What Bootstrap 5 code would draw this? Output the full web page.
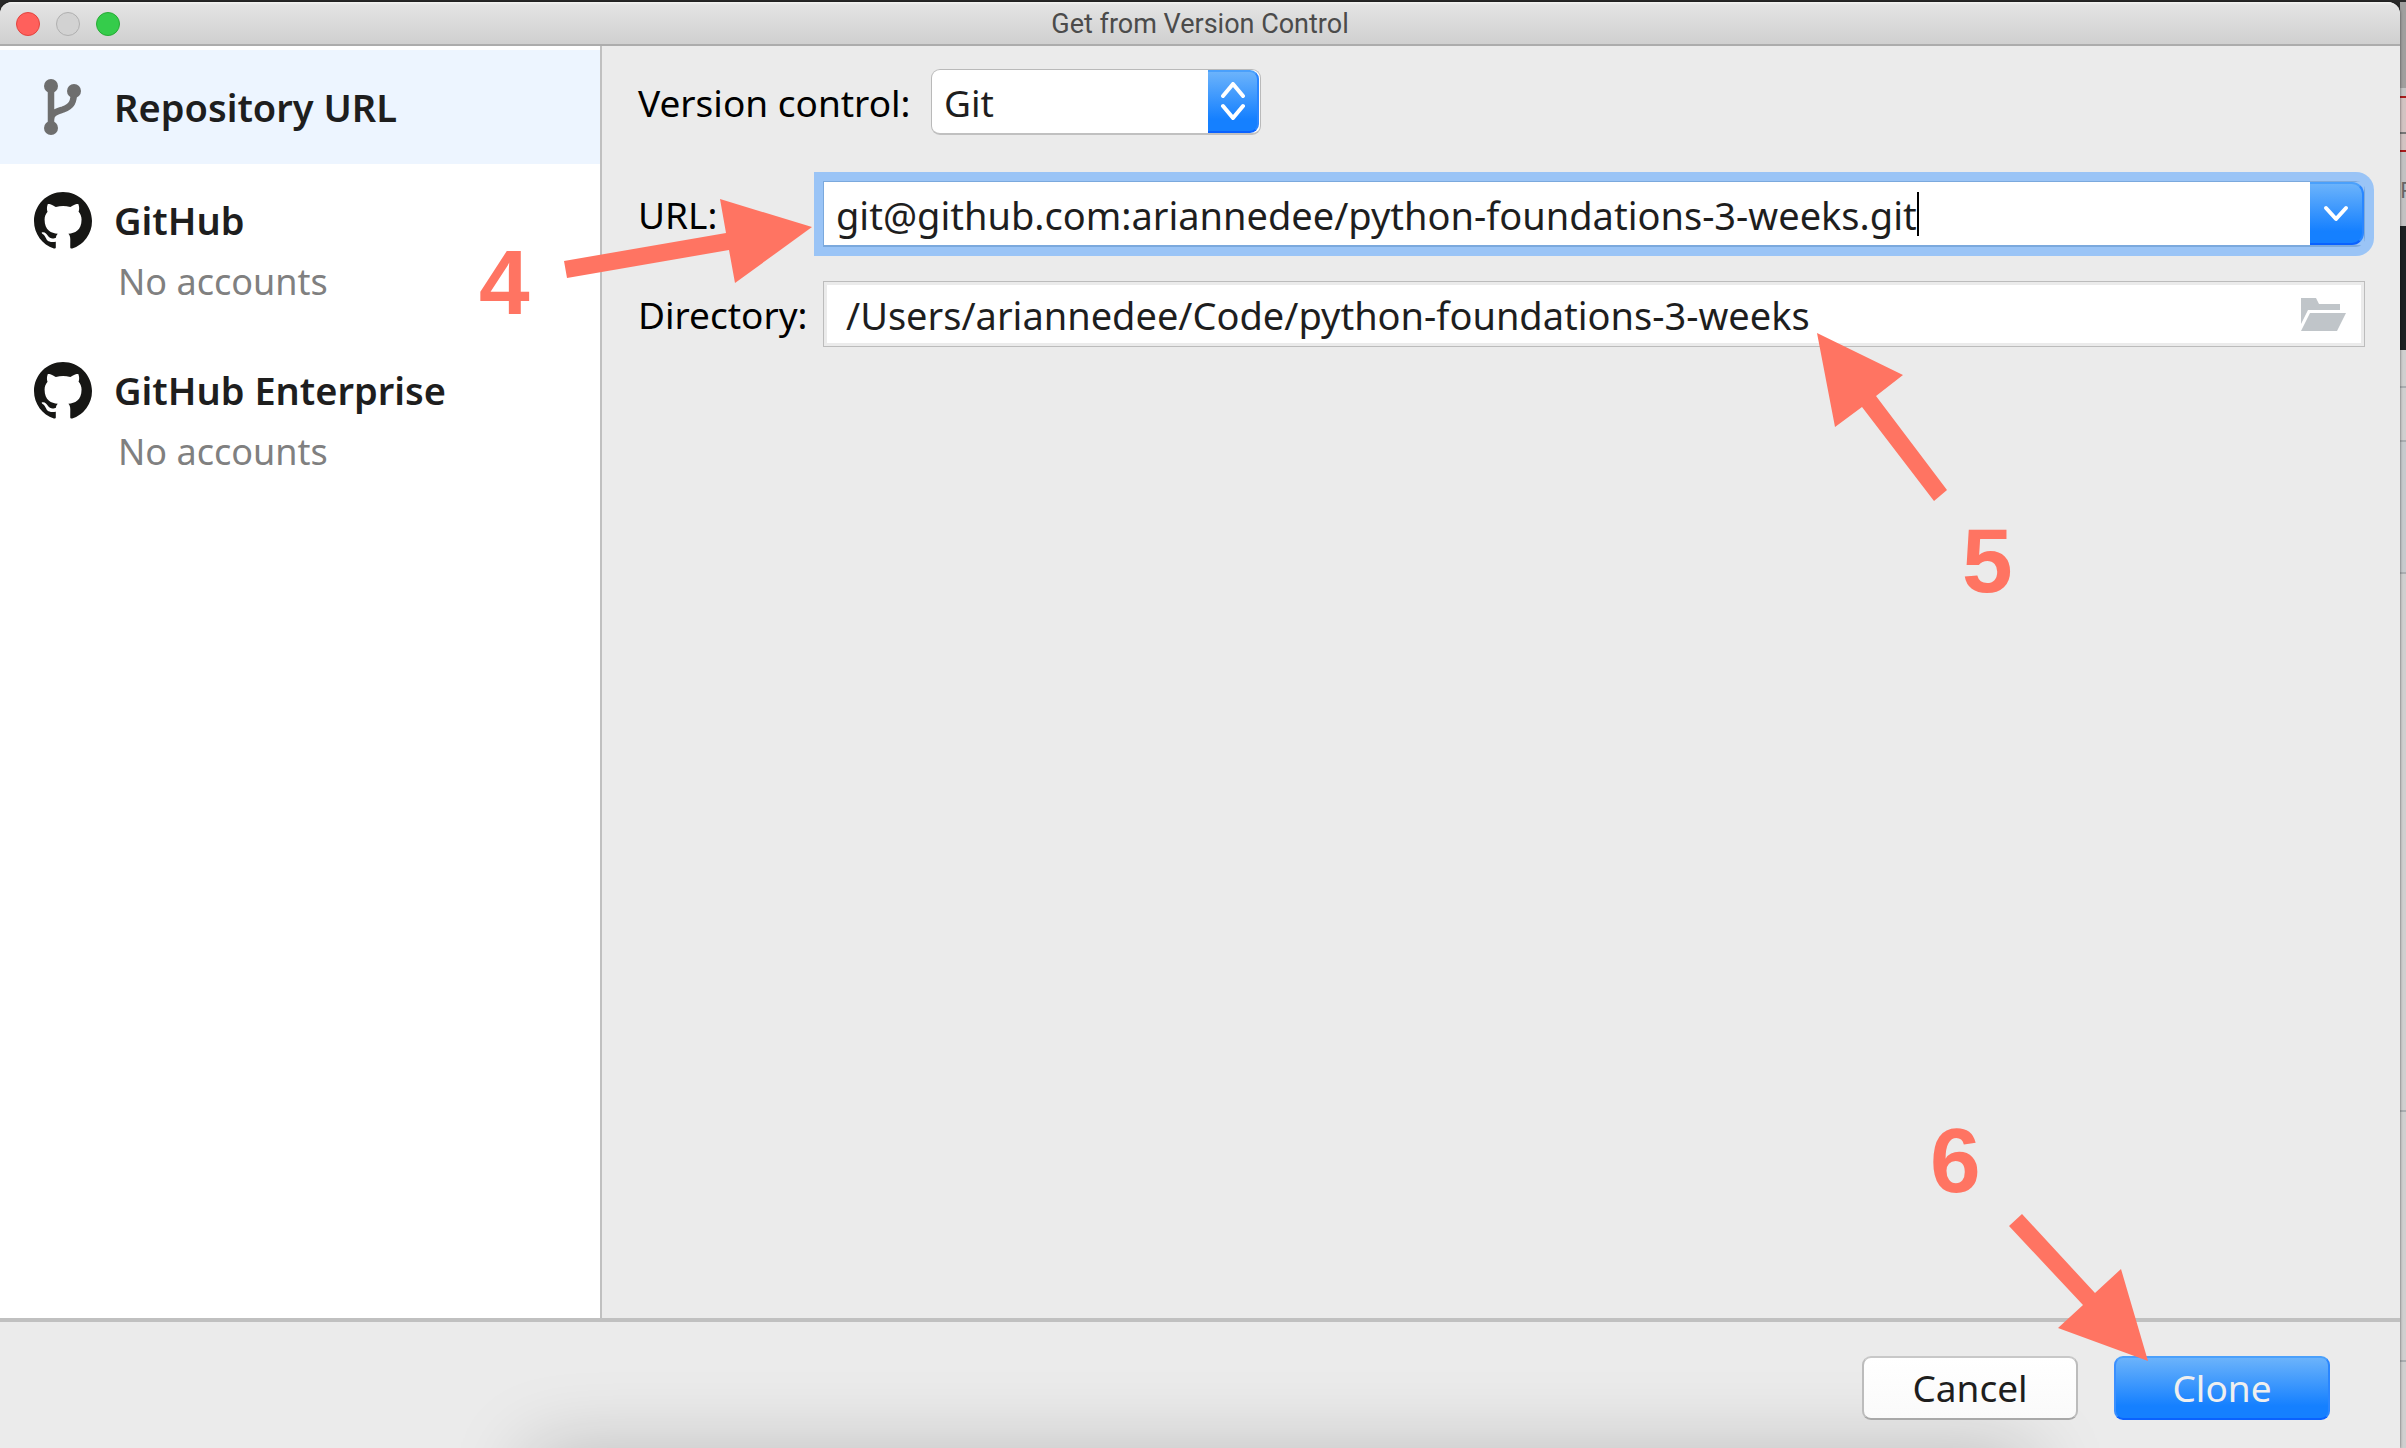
<!DOCTYPE html>
<html lang="en">
<head>
<meta charset="utf-8">
<meta name="viewport" content="width=device-width, initial-scale=1">
<title>Get from Version Control</title>
<link href="https://cdn.jsdelivr.net/npm/bootstrap@5.3.0/dist/css/bootstrap.min.css" rel="stylesheet">
<style>
  body { font-family: "Noto Sans", "Open Sans", sans-serif; font-size: 37px; line-height: 48px; color: #1e1e1e; background: #2a2a2a; }
  .desktop { padding-top: 2px; }
  .win { background: #ebebeb; border-radius: 12px 12px 0 0; box-shadow: 0 0 3px rgba(0,0,0,.6); z-index: 1; }
  .titlebar { height: 44px; background: linear-gradient(#f4f4f2, #e3e3e3 3px, #d0d0d0); border-bottom: 2px solid #acacac; border-radius: 12px 12px 0 0; font: 27px/45px Roboto, sans-serif; color: #4b4b4b; }
  .lights { left: 16px; top: 10px; gap: 16px; }
  .light { width: 24px; height: 24px; border-radius: 50%; padding: 0; border: 1px solid #b0b0b0; background: #d2d2d2; }
  .light-close { background: #ff605c; border-color: #e2443f; }
  .light-zoom { background: #35cc4b; border-color: #27ab35; }

  .sidebar { width: 602px; background: #fff; border-right: 2px solid #c0c0c0; padding-top: 4px; }
  .source { color: #1e1e1e; text-decoration: none; padding: 28px 0 28px 34px; gap: 22px; }
  .source.active { background: #edf5ff; }
  .source strong { font-size: 38px; font-weight: 600; display: block; }
  .source .copy { padding-top: 4px; }
  .source .sub { font-size: 36px; color: #808080; padding-left: 4px; margin-top: 14px; display: block; }
  .source svg { width: 58px; height: 58px; flex: none; }

  .form-area { padding: 23px 35px 0 36px; color: #000; }
  .form-area label { padding-top: 2px; flex: none; }
  .field-label { width: 185px; }
  .vcs-label { width: 273px; }
  .vcs-row { margin-bottom: 46px; gap: 20px; }
  .url-row { margin-bottom: 34px; }
  .blue { background: linear-gradient(#6bb3fb, #1580ff 80%); border: 2px solid; border-color: #4aa0fb #2a86ff #0a62ff; border-left: 0; }
  .vcs { width: 330px; height: 66px; }
  .vcs select { appearance: none; width: 100%; height: 100%; background: #fff; border: 1px solid #b9b9b9; border-bottom: 2px solid #c0c0c0; border-radius: 9px; padding: 2px 60px 0 12px; color: #1e1e1e; }
  .vcs .blue { position: absolute; right: 2px; top: 1px; bottom: 2px; width: 51px; border-radius: 0 9px 9px 0; pointer-events: none; }
  .combo { height: 66px; background: #fff; border: 1px solid #7ba9dd; border-bottom-width: 2px; box-shadow: 0 0 0 9px #9ac4f6; border-radius: 0 9px 9px 0; }
  .text-input { border: 0; outline: 0; background: transparent; color: #1e1e1e; padding: 2px 0 0; height: 60px; font-size: 38px; }
  .url-input { width: 1093px; padding-left: 12px; }
  .caret-bar { width: 2px; height: 44px; background: #000; }
  .combo-corner { background: #9ac4f6; }
  .combo .blue { width: 54px; border-radius: 0 12px 12px 0; padding: 0; line-height: 0; }
  .dir { height: 66px; background: #fff; border: 1px solid #bcbcbc; box-shadow: inset 0 0 0 3px #ebebeb; padding: 0 18px 0 22px; }
  .dir button { border: 0; background: none; padding: 0; line-height: 0; }

  .footer-bar { height: 130px; border-top: 4px solid #c0c0c0; padding: 34px 70px 0 0; gap: 36px; }
  .action { width: 216px; height: 64px; border-radius: 9px; padding: 0; z-index: 1; }
  .cancel { background: linear-gradient(#fff, #fafafa); border: 2px solid; border-color: #c8c8c8 #bcbcbc #a8a8a8; color: #1e1e1e; }
  .clone { border-left: 2px solid #3a8fff; color: #efefef; }
  .dock-shade { position: absolute; left: 540px; right: 380px; bottom: -64px; height: 50px; box-shadow: 0 0 80px 10px rgba(0,0,0,.22); }

  /* sliver of the editor behind the dialog */
  .behind { width: 6px; background: #cfcfcf; font-size: 22px; line-height: 74px; color: #666; }
  .behind > div { flex: none; }
  .notes text { font: bold 91px "Liberation Sans", Arial, sans-serif; }
</style>
<script src="https://cdn.jsdelivr.net/npm/bootstrap@5.3.0/dist/js/bootstrap.bundle.min.js"></script>
</head>
<body>
<div class="desktop vh-100 d-flex position-relative overflow-hidden">
  <div class="win flex-grow-1 d-flex flex-column position-relative">
    <header class="titlebar position-relative text-center">
      <div class="lights position-absolute d-flex">
        <button class="light light-close" aria-label="Close"></button>
        <button class="light" aria-label="Minimize" disabled></button>
        <button class="light light-zoom" aria-label="Zoom"></button>
      </div>
      Get from Version Control
    </header>

    <div class="d-flex flex-grow-1">
      <nav class="sidebar flex-shrink-0">
        <a href="#" class="source active d-flex align-items-center">
          <svg viewBox="0 0 58 58" fill="#6e6e6e"><circle cx="17" cy="8" r="7"/><circle cx="40" cy="13" r="7"/><circle cx="17" cy="50" r="7"/><path d="M17 8V50M40 13C40 24 38 28 29 31.500C22 34 17 35 17 42" fill="none" stroke="#6e6e6e" stroke-width="6.500"/></svg>
          <strong>Repository URL</strong>
        </a>
        <a href="#" class="source d-flex align-items-start">
          <svg viewBox="0 0 16 16" fill="#161614"><path d="M8 0C3.580 0 0 3.580 0 8c0 3.540 2.290 6.530 5.470 7.590.4.070.55-.17.55-.38 0-.19-.01-.82-.01-1.490-2.010.37-2.530-.49-2.690-.94-.09-.23-.48-.94-.82-1.130-.28-.15-.68-.52-.01-.53.63-.01 1.080.58 1.230.82.72 1.210 1.870.87 2.330.66.070-.52.28-.87.51-1.070-1.780-.2-3.640-.89-3.640-3.950 0-.87.31-1.590.82-2.150-.08-.2-.36-1.020.08-2.120 0 0 .67-.21 2.200.82a7.640 7.640 0 0 1 4 0c1.530-1.040 2.200-.82 2.200-.82.44 1.100.16 1.920.08 2.120.51.56.82 1.270.82 2.150 0 3.070-1.870 3.750-3.650 3.950.29.25.54.73.54 1.480 0 1.070-.01 1.930-.01 2.200 0 .21.15.46.55.38A8.010 8.010 0 0 0 16 8c0-4.420-3.580-8-8-8z"/></svg>
          <span class="copy"><strong>GitHub</strong><span class="sub">No accounts</span></span>
        </a>
        <a href="#" class="source d-flex align-items-start">
          <svg viewBox="0 0 16 16" fill="#161614"><path d="M8 0C3.580 0 0 3.580 0 8c0 3.540 2.290 6.530 5.470 7.590.4.070.55-.17.55-.38 0-.19-.01-.82-.01-1.490-2.010.37-2.530-.49-2.690-.94-.09-.23-.48-.94-.82-1.130-.28-.15-.68-.52-.01-.53.63-.01 1.080.58 1.230.82.72 1.210 1.870.87 2.330.66.070-.52.28-.87.51-1.070-1.780-.2-3.640-.89-3.640-3.950 0-.87.31-1.590.82-2.150-.08-.2-.36-1.020.08-2.120 0 0 .67-.21 2.200.82a7.640 7.640 0 0 1 4 0c1.530-1.040 2.200-.82 2.200-.82.44 1.100.16 1.920.08 2.120.51.56.82 1.270.82 2.150 0 3.070-1.870 3.750-3.650 3.950.29.25.54.73.54 1.480 0 1.070-.01 1.930-.01 2.200 0 .21.15.46.55.38A8.010 8.010 0 0 0 16 8c0-4.420-3.580-8-8-8z"/></svg>
          <span class="copy"><strong>GitHub Enterprise</strong><span class="sub">No accounts</span></span>
        </a>
      </nav>

      <form class="form-area flex-grow-1">
        <div class="vcs-row d-flex align-items-center">
          <label class="vcs-label" for="vcs">Version control:</label>
          <div class="vcs position-relative">
            <select id="vcs"><option>Git</option></select>
            <span class="blue d-flex align-items-center justify-content-center">
              <svg width="26" height="40" viewBox="0 0 26 40" fill="none" stroke="#fff" stroke-width="4" stroke-linecap="round" stroke-linejoin="round"><path d="M3 14L13 2L23 14M3 24L13 36L23 24"/></svg>
            </span>
          </div>
        </div>
        <div class="url-row d-flex align-items-center">
          <label class="field-label" for="url">URL:</label>
          <div class="combo flex-grow-1 d-flex align-items-center">
            <input class="text-input url-input" id="url" type="text" value="git@github.com:ariannedee/python-foundations-3-weeks.git">
            <span class="caret-bar"></span>
            <span class="combo-corner ms-auto align-self-stretch d-flex">
              <button type="button" class="blue" aria-label="Show recent URLs">
                <svg width="26" height="18" viewBox="0 0 26 18" fill="none" stroke="#fff" stroke-width="4" stroke-linecap="round" stroke-linejoin="round"><path d="M3 3L13 14L23 3"/></svg>
              </button>
            </span>
          </div>
        </div>
        <div class="d-flex align-items-center">
          <label class="field-label" for="dir">Directory:</label>
          <div class="dir flex-grow-1 d-flex align-items-center">
            <input class="text-input flex-grow-1" id="dir" type="text" value="/Users/ariannedee/Code/python-foundations-3-weeks">
            <button type="button" aria-label="Browse"><svg width="45" height="33" viewBox="0 0 45 33" fill="#c0c5c9"><path d="M0 0H15L18 6H39V12H7L0 26Z"/><path d="M9 15H45L36 33H0Z"/></svg></button>
          </div>
        </div>
      </form>
    </div>

    <footer class="footer-bar d-flex justify-content-end position-relative overflow-hidden">
      <div class="dock-shade"></div>
      <button class="action cancel">Cancel</button>
      <button class="action blue clone">Clone</button>
    </footer>
  </div>

  <div class="behind d-flex flex-column overflow-hidden" aria-hidden="true">
    <div style="height:86px;background:#a09f9e"></div>
    <div style="height:8px;background:#c4c4c4"></div>
    <div style="height:56px;background:linear-gradient(transparent 34px,#777 34px,#777 36px,transparent 36px) #d3c3c2;border:solid #a81c1c;border-width:2px 0"></div>
    <div style="height:74px;background:#c2c2c2">R</div>
    <div style="height:124px;background:#1d2122"></div>
    <div style="height:38px;border-bottom:2px solid #aaaeb1"></div>
    <div style="height:54px;border-bottom:2px solid #aaaeb1"></div>
    <div style="height:132px;background:#c6cacd;border-bottom:2px solid #aaaeb1"></div>
    <div style="height:538px;border-bottom:2px solid #aaaeb1"></div>
    <div style="height:250px;border-bottom:2px solid #aaaeb1"></div>
  </div>

  <!-- numbered callouts laid over the dialog -->
  <svg class="notes position-absolute top-0 start-0 w-100 h-100 pe-none z-2" viewBox="0 0 2406 1448" preserveAspectRatio="xMinYMin" fill="#ff7462">
    <text x="479" y="314">4</text>
    <path d="M564 261L726 233L720 199L812 227L735 283L729 250L567 278Z"/>
    <text x="1962" y="592">5</text>
    <path d="M1817 333L1903 375L1876 396L1947 490L1934 501L1862 407L1835 427Z"/>
    <text x="1930" y="1192">6</text>
    <path d="M2022 1214L2095 1293L2121 1269L2148 1361L2058 1328L2083 1305L2009 1226Z"/>
  </svg>
</div>
</body>
</html>
